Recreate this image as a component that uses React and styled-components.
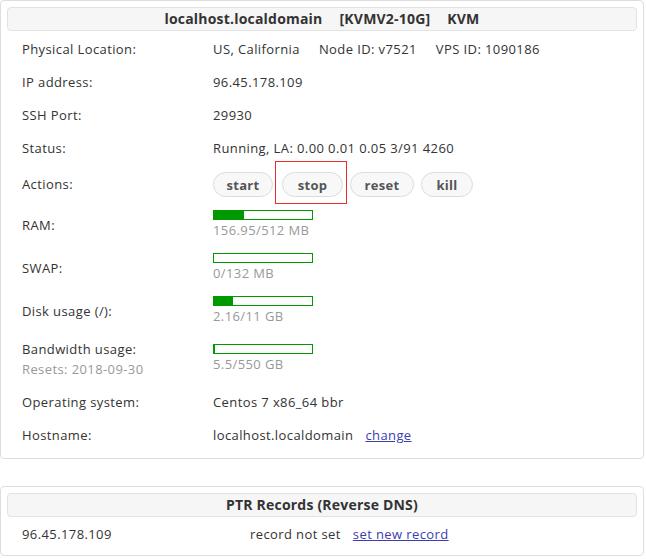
import React from "react";
import styled, { createGlobalStyle } from "styled-components";

const GlobalStyle = createGlobalStyle`
	body {
		margin: 0;
		background: #fff;
		font-family: "Open Sans", "Noto Sans", sans-serif;
		font-size: 13px;
		letter-spacing: 0.4px;
		color: #333;
	}
`;

const info = [
	{ label: "Physical Location:", parts: ["US, California", "Node ID: v7521", "VPS ID: 1090186"] },
	{ label: "IP address:", parts: ["96.45.178.109"] },
	{ label: "SSH Port:", parts: ["29930"] },
	{ label: "Status:", parts: ["Running, LA: 0.00 0.01 0.05 3/91 4260"] },
];

const usage = [
	{ label: "RAM:", used: 156.95, total: 512, text: "156.95/512 MB" },
	{ label: "SWAP:", used: 0, total: 132, text: "0/132 MB" },
	{ label: "Disk usage (/):", used: 2.16, total: 11, text: "2.16/11 GB" },
	{ label: "Bandwidth usage:", used: 5.5, total: 550, text: "5.5/550 GB", sub: "Resets: 2018-09-30" },
];

const App = () => {
	return (
		<Page>
			<GlobalStyle />
			<Card>
				<CardHeader>
					localhost.localdomain<Gap>[KVMV2-10G]</Gap><Gap>KVM</Gap>
				</CardHeader>
				<Rows>
					{info.map((row) => (
						<Row key={row.label}>
							<Label>{row.label}</Label>
							<Value>
								{row.parts.map((p) => (
									<Part key={p} space={19}>{p}</Part>
								))}
							</Value>
						</Row>
					))}
					<Row actions>
						<Label>Actions:</Label>
						<Buttons>
							<Button w={60}>start</Button>
							<Marked>
								<Button w={61}>stop</Button>
							</Marked>
							<Button w={64}>reset</Button>
							<Button w={52}>kill</Button>
						</Buttons>
					</Row>
					{usage.map((u) => (
						<Row key={u.label}>
							<Label>
								{u.label}
								{u.sub && <SubLabel>{u.sub}</SubLabel>}
							</Label>
							<Usage>
								<Bar>
									<Fill style={{ width: `${(u.used / u.total) * 100}%` }} />
								</Bar>
								<Muted>{u.text}</Muted>
							</Usage>
						</Row>
					))}
					<Row>
						<Label>Operating system:</Label>
						<Value>Centos 7 x86_64 bbr</Value>
					</Row>
					<Row>
						<Label>Hostname:</Label>
						<Value>
							<Part space={12}>localhost.localdomain</Part>
							<Link href='#'>change</Link>
						</Value>
					</Row>
				</Rows>
			</Card>

			<Card>
				<CardHeader>PTR Records (Reverse DNS)</CardHeader>
				<PtrRow>
					<span>96.45.178.109</span>
					<Value>
						<Part space={12}>record not set</Part>
						<Link href='#'>set new record</Link>
					</Value>
				</PtrRow>
			</Card>
		</Page>
	);
};

export default App;

const Page = styled.div`
	width: 644px;
	display: flex;
	flex-direction: column;
	gap: 27px;
`;

const Card = styled.div`
	border: 1px solid #dedede;
	border-radius: 4px;
	padding: 6px;
	background: #fff;
`;

const CardHeader = styled.div`
	height: 22px;
	line-height: 22px;
	border: 1px solid #e2e2e2;
	border-radius: 4px;
	background: #f6f6f6;
	text-align: center;
	font-weight: bold;
	font-size: 14px;
	letter-spacing: 0.2px;
	color: #333;
	white-space: nowrap;
`;

const Gap = styled.span`
	margin-left: 17px;
`;

const Rows = styled.div`
	margin-top: 2px;
	display: flex;
	flex-direction: column;
`;

const Row = styled.div`
	display: grid;
	grid-template-columns: 191px 1fr;
	align-items: center;
	padding: ${(p) => (p.actions ? "7px 0 7px" : "8px 0")};
	padding-left: 15px;
	line-height: 17px;
`;

const Label = styled.div`
	color: #333;
`;

const SubLabel = styled.div`
	margin-top: 3px;
	color: #999;
`;

const Value = styled.div`
	color: #333;
	white-space: nowrap;
`;

const Part = styled.span`
	margin-right: ${(p) => p.space}px;
`;

const Buttons = styled.div`
	display: flex;
	gap: 7px;
`;

const Button = styled.button`
	width: ${(p) => p.w}px;
	height: 25px;
	padding: 0;
	border: 1px solid #dcdcdc;
	border-radius: 13px;
	background: #f8f8f8;
	font-family: "Open Sans", "Noto Sans", sans-serif;
	font-size: 13px;
	font-weight: bold;
	letter-spacing: 0.3px;
	color: #555;
	cursor: pointer;
`;

const Marked = styled.span`
	position: relative;
	display: inline-flex;
	margin-left: 2px;

	&::after {
		content: "";
		position: absolute;
		left: -7px;
		right: -4px;
		top: -11px;
		bottom: -7px;
		border: 1px solid #ee2b2b;
		pointer-events: none;
	}
`;

const Usage = styled.div`
	display: flex;
	flex-direction: column;
`;

const Bar = styled.div`
	width: 100px;
	height: 10px;
	box-sizing: border-box;
	border: 1px solid #009900;
	margin: -2px 0 2px;
	background: #fff;
`;

const Fill = styled.div`
	height: 100%;
	background: #009900;
`;

const Muted = styled.span`
	color: #999;
`;

const Link = styled.a`
	color: #3d3db0;
	text-decoration: underline;
`;

const PtrRow = styled.div`
	display: grid;
	grid-template-columns: 228px 1fr;
	padding: 9px 0 6px 15px;
	line-height: 17px;
`;
